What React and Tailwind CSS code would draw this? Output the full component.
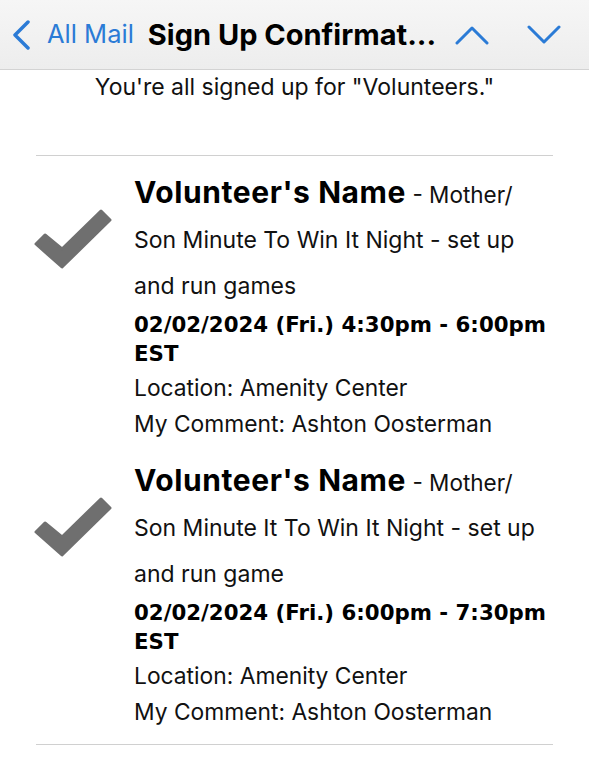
import React from 'react';

const SANS = { fontFamily: 'Inter, "Liberation Sans", sans-serif' };

const SIGNUPS = [
  {
    name: "Volunteer's Name",
    lines: ['Mother/', 'Son Minute To Win It Night - set up', 'and run games'],
    date: '02/02/2024 (Fri.) 4:30pm - 6:00pm',
    location: 'Amenity Center',
    comment: 'Ashton Oosterman',
  },
  {
    name: "Volunteer's Name",
    lines: ['Mother/', 'Son Minute It To Win It Night - set up', 'and run game'],
    date: '02/02/2024 (Fri.) 6:00pm - 7:30pm',
    location: 'Amenity Center',
    comment: 'Ashton Oosterman',
  },
];

// heavy gray checkmark shown beside each slot
const CheckMark = () => (
  <svg width="80" height="66" viewBox="0 0 80 66" className="block">
    <polygon
      points="12,30 3,39 29,62 77,15 68,6 29,44"
      fill="#6f6f6f"
      stroke="#6f6f6f"
      strokeWidth="3"
      strokeLinejoin="round"
    />
  </svg>
);

const SignupRow = ({ item }) => (
  <div className="flex py-[7px]">
    <div className="w-[134px] shrink-0 pl-[33px] pt-[35px]">
      <CheckMark />
    </div>
    <div className="flex-1 text-[#111] whitespace-nowrap">
      <p className="text-[22.5px] leading-[45px]">
        <span className="text-[30px] font-bold tracking-[0.6px] text-black">{item.name}</span> - {item.lines[0]}
        <br />
        <span className="text-[23px]">{item.lines[1]}</span>
        <br />
        <span className="text-[23px]">{item.lines[2]}</span>
      </p>
      <p
        className="mt-[1px] text-[21.3px] font-bold leading-[29px] text-black"
        style={{ fontFamily: '"DejaVu Sans", Verdana, sans-serif' }}
      >
        {item.date}
        <br />
        EST
      </p>
      <p className="mt-[2px] text-[22.8px] leading-[36px]">Location: {item.location}</p>
      <p className="text-[22.8px] leading-[36px]">My Comment: {item.comment}</p>
    </div>
  </div>
);

export default function App() {
  return (
    <div className="w-[589px] h-[770px] bg-white overflow-hidden" style={SANS}>
      {/* ── Mail header ── */}
      <div className="h-[70px] flex items-center bg-gradient-to-b from-[#f6f6f6] to-[#ededed] border-b border-[#d3d3d3]">
        <svg width="20" height="30" viewBox="0 0 20 30" className="ml-[12px] shrink-0">
          <path d="M16 2 L3 15 L16 28" fill="none" stroke="#2b7bd6" strokeWidth="3.5" strokeLinecap="round" strokeLinejoin="round" />
        </svg>
        <span className="ml-[15px] text-[25.5px] text-[#2b7bd6] whitespace-nowrap">All Mail</span>
        <span className="ml-[14px] text-[29px] font-bold text-black whitespace-nowrap">
          Sign Up Confirmat...
        </span>
        <svg width="34" height="20" viewBox="0 0 34 20" className="ml-[19px] shrink-0">
          <path d="M2 18 L17 3 L32 18" fill="none" stroke="#2b7bd6" strokeWidth="3" strokeLinecap="round" strokeLinejoin="round" />
        </svg>
        <svg width="34" height="20" viewBox="0 0 34 20" className="ml-[38px] shrink-0">
          <path d="M2 2 L17 17 L32 2" fill="none" stroke="#2b7bd6" strokeWidth="3" strokeLinecap="round" strokeLinejoin="round" />
        </svg>
      </div>

      <p className="pt-[2px] text-center text-[23px] leading-[30px] text-[#111]">
        You're all signed up for "Volunteers."
      </p>

      {/* ── Signup list ── */}
      <div className="mt-[53px] mx-[36px] border-t border-[#d0d0d0]" />
      <div className="flex flex-col gap-[2px] py-[7px]">
        {SIGNUPS.map((item, i) => (
          <SignupRow key={i} item={item} />
        ))}
      </div>
      <div className="mx-[36px] border-t border-[#d0d0d0]" />
    </div>
  );
}
